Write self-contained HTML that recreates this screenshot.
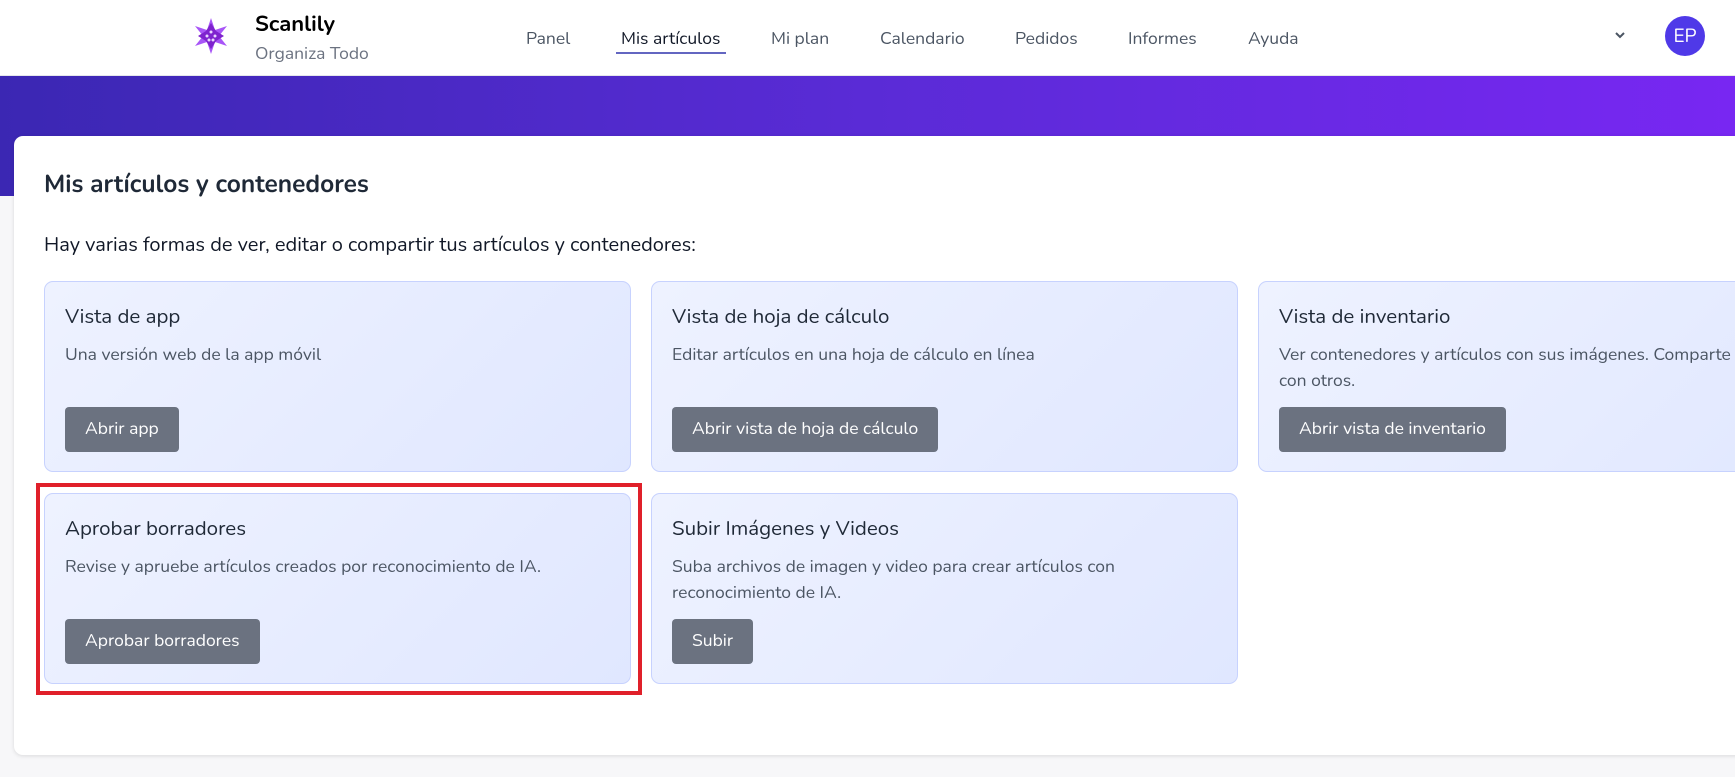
<!DOCTYPE html>
<html><head><meta charset="utf-8">
<style>
*{margin:0;padding:0;box-sizing:border-box}
body{width:1735px;height:777px;overflow:hidden;background:#f7f7f9;font-family:"Nunito","Liberation Sans",sans-serif;position:relative;color:#111827}
.hdr{position:absolute;left:0;top:0;width:1735px;height:76px;background:#fff;border-bottom:1px solid #e5e7eb}
.banner{position:absolute;left:0;top:76px;width:1735px;height:120px;background:linear-gradient(90deg,#3b27b3,#5a2bd6 50%,#7827f2)}
.brand{position:absolute;left:255px;top:9px;font-size:22px;font-weight:bold;color:#000}
.sub{position:absolute;left:255px;top:42px;font-size:17.5px;color:#6b7280}
.nav{position:absolute;top:27px;font-size:17.5px;color:#4b5563}
.nav.act{color:#111827}
.ul{position:absolute;left:616px;top:52px;width:110px;height:2px;background:#6366c1}
.av{position:absolute;left:1665px;top:16px;width:40px;height:40px;border-radius:50%;background:#4f39e8;color:#fff;font-size:19px;text-align:center;line-height:40px}
.main{position:absolute;left:14px;top:136px;width:1760px;height:619px;background:#fff;border-radius:9px;box-shadow:0 1px 4px rgba(0,0,0,.12)}
h1{position:absolute;left:44px;top:167px;font-size:24.5px;font-weight:bold;color:#1f2937}
.intro{position:absolute;left:44px;top:232px;font-size:20px;color:#111827}
.card{position:absolute;width:587px;height:191px;border:1px solid #c7d2fe;border-radius:9px;background:linear-gradient(135deg,#eef2ff,#e0e7ff)}
.card h3{position:absolute;left:20px;top:21px;font-size:20.5px;font-weight:normal;color:#1f2937}
.card p{position:absolute;left:20px;top:60px;right:10px;font-size:17.5px;line-height:26px;color:#4b5563}
.btn{position:absolute;left:20px;top:125px;height:45px;padding:0 20px;background:#6b7280;color:#fff;font-size:17.5px;line-height:45px;border-radius:4px;white-space:nowrap}
.red{position:absolute;left:36px;top:483px;width:606px;height:212px;border:4px solid #e0202a}
</style></head><body>
<div class="hdr">
<svg style="position:absolute;left:192px;top:17px" width="38" height="38" viewBox="0 0 38 38">
<g fill="#a855f7"><polygon points="19,1 23,13 35,9 27,19 35,29 23,25 19,37 15,25 3,29 11,19 3,9 15,13"/></g>
<g fill="#7e22ce"><polygon points="19,6 24,14 32,19 24,24 19,32 14,24 6,19 14,14"/></g>
<g fill="#e9d5ff"><circle cx="19" cy="15" r="1.5"/><circle cx="15" cy="19" r="1.5"/><circle cx="23" cy="19" r="1.5"/><circle cx="17" cy="23" r="1.5"/><circle cx="21" cy="23" r="1.5"/></g>
</svg>
<div class="brand">Scanlily</div><div class="sub">Organiza Todo</div>
<div class="nav" style="left:526px">Panel</div>
<div class="nav act" style="left:621px">Mis artículos</div>
<div class="ul"></div>
<div class="nav" style="left:771px">Mi plan</div>
<div class="nav" style="left:880px">Calendario</div>
<div class="nav" style="left:1015px">Pedidos</div>
<div class="nav" style="left:1128px">Informes</div>
<div class="nav" style="left:1248px">Ayuda</div>
<svg style="position:absolute;left:1614px;top:31px" width="12" height="8" viewBox="0 0 12 8"><path d="M2 2l4 4 4-4" stroke="#4b5563" stroke-width="2" fill="none"/></svg>
<div class="av">EP</div>
</div>
<div class="banner"></div>
<div class="main"></div>
<h1>Mis artículos y contenedores</h1>
<div class="intro">Hay varias formas de ver, editar o compartir tus artículos y contenedores:</div>
<div class="card" style="left:44px;top:281px"><h3>Vista de app</h3><p>Una versión web de la app móvil</p><div class="btn">Abrir app</div></div>
<div class="card" style="left:651px;top:281px"><h3>Vista de hoja de cálculo</h3><p>Editar artículos en una hoja de cálculo en línea</p><div class="btn">Abrir vista de hoja de cálculo</div></div>
<div class="card" style="left:1258px;top:281px;width:600px"><h3>Vista de inventario</h3><p style="right:110px">Ver contenedores y artículos con sus imágenes. Comparte con otros.</p><div class="btn">Abrir vista de inventario</div></div>
<div class="card" style="left:44px;top:493px"><h3>Aprobar borradores</h3><p>Revise y apruebe artículos creados por reconocimiento de IA.</p><div class="btn">Aprobar borradores</div></div>
<div class="card" style="left:651px;top:493px"><h3>Subir Imágenes y Videos</h3><p style="right:60px">Suba archivos de imagen y video para crear artículos con reconocimiento de IA.</p><div class="btn">Subir</div></div>
<div class="red"></div>
</body></html>
